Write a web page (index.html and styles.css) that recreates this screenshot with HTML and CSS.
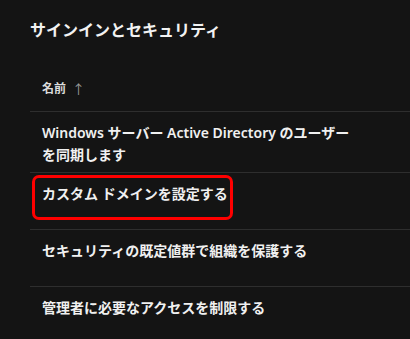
FILE: index.html
```html
<!DOCTYPE html>
<html>
<head>
  <title>サインインとセキュリティ</title>
  <link rel="stylesheet" href="styles.css">
</head>
<body>
  <div class="panel">
    <h2 class="panel-title">サインインとセキュリティ</h2>

    <div class="list">
      <div class="list-header">
        <span class="col-name">名前</span>
        <span class="sort-arrow">↑</span>
      </div>

      <div class="list-row">
        <div class="row-name">Windows サーバー Active Directory のユーザーを同期します</div>
      </div>
      <div class="list-row">
        <div class="row-name">カスタム ドメインを設定する</div>
        <div class="highlight-box"></div>
      </div>
      <div class="list-row">
        <div class="row-name">セキュリティの既定値群で組織を保護する</div>
      </div>
      <div class="list-row">
        <div class="row-name">管理者に必要なアクセスを制限する</div>
      </div>
    </div>
  </div>
</body>
</html>
```

FILE: styles.css
```css
body {
  margin: 0;
  background-color: #141414;
  color: #f0f0f0;
  font-family: "Noto Sans", "Noto Sans CJK JP", sans-serif;
}

.panel {
  padding: 18px 0 0 30px;
}

.panel-title {
  margin: 0;
  font-size: 16px;
  line-height: 24px;
  font-weight: 700;
  color: #f2f2f2;
}

.list {
  margin-top: 37px;
}

.list-header {
  display: flex;
  align-items: center;
  padding: 0 0 12px 12px;
  line-height: 20px;
  font-size: 12px;
  font-weight: 700;
  color: #dcdcdc;
  border-bottom: 1px solid #2e2e2e;
}

.sort-arrow {
  margin-left: 6px;
  font-weight: 400;
  font-size: 13px;
  color: #9a9a9a;
}

.list-row {
  position: relative;
  box-sizing: border-box;
  min-height: 57px;
  padding: 10px 0 6px 12px;
  border-bottom: 1px solid #2e2e2e;
  font-size: 14px;
  line-height: 22px;
  font-weight: 600;
}

.row-name {
  width: 312px;
}

.highlight-box {
  position: absolute;
  left: 2px;
  top: 2px;
  width: 195px;
  height: 39px;
  border: 3px solid #ff0000;
  border-radius: 7px;
}
```
